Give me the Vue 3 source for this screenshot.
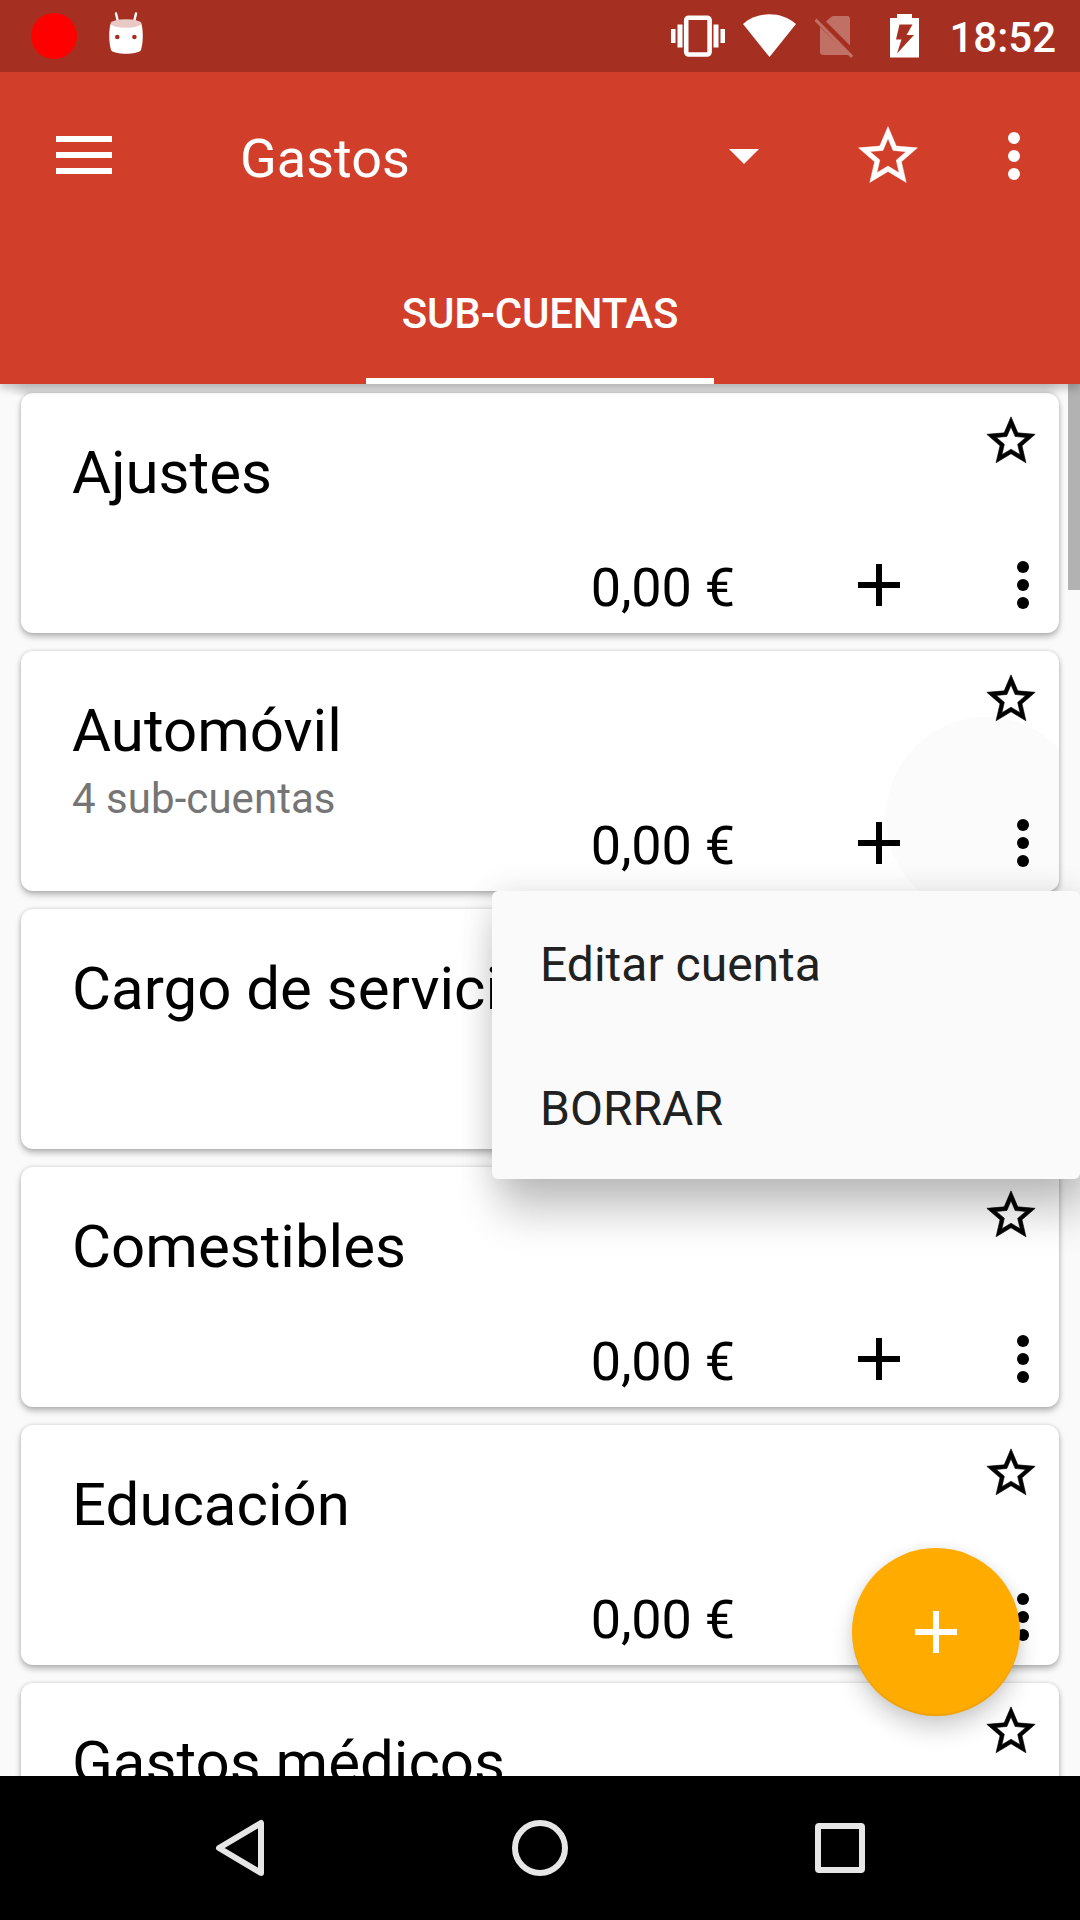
<script setup>
const accounts = [
  { name: 'Ajustes' },
  { name: 'Automóvil', detail: '4 sub-cuentas', pressed: true },
  { name: 'Cargo de servicio' },
  { name: 'Comestibles' },
  { name: 'Educación' },
  { name: 'Gastos médicos' },
]
const menu = ['Editar cuenta', 'BORRAR']
const starPath =
  'M22 9.24l-7.19-.62L12 2 9.19 8.63 2 9.24l5.46 4.73L5.82 21 12 17.27 18.18 21l-1.63-7.03L22 9.24zM12 15.4l-3.76 2.27 1-4.28-3.32-2.88 4.38-.38L12 6.1l1.71 4.04 4.38.38-3.32 2.88 1 4.28L12 15.4z'
</script>

<template>
  <div class="screen">
    <div class="status">
      <svg class="rec" width="46" height="46" viewBox="0 0 46 46"><circle cx="23" cy="23" r="23" fill="#f00" /></svg>
      <svg class="droid" width="36" height="44" viewBox="0 0 36 44">
        <path d="M8 2.5L10 11M28 2.5L26 11" stroke="#fff" stroke-width="2.4" stroke-linecap="round" />
        <path d="M2.5 13C.7 20 .7 31 3 39c3 5 27 5 30 0 2.3-8 2.3-19 .5-26z" fill="#fff" />
        <ellipse cx="18" cy="12.5" rx="15.5" ry="4.2" fill="#e9c9c6" />
        <circle cx="9.3" cy="26" r="2.3" fill="#a53021" />
        <circle cx="26.4" cy="26" r="2.3" fill="#a53021" />
      </svg>
      <span class="grow"></span>
      <svg width="54" height="44" viewBox="671 14 54 44">
        <rect x="686.2" y="17.7" width="23.4" height="36.8" rx="2.5" fill="none" stroke="#fff" stroke-width="4.6" />
        <path fill="#fff" d="M671 29h4.5v14H671zM677.5 24.5h5v23h-5zM713.5 24.5h5v23h-5zM720.5 29h4.5v14h-4.5z" />
      </svg>
      <svg class="wifi" width="54" height="44" viewBox="743 14 54 44">
        <path d="M743 24C758 11 781 11 796 24L769.5 57z" fill="#fff" />
      </svg>
      <svg class="sim" width="40" height="44" viewBox="815 15 40 44">
        <g fill="#fff" fill-opacity=".31">
          <path d="M826 21.5L831 17Q832 16 834 16h13q3 0 3 3v26.5z" />
          <path d="M820 27l28 27.5q-1 .5-2 .5h-23q-3 0-3-3z" />
          <path d="M816.5 18.5l-2 2.2 36.5 37.3 2.3-2.2z" />
        </g>
      </svg>
      <svg class="battery" width="29" height="44" viewBox="890 14 29 44">
        <path fill="#fff" fill-rule="evenodd" d="M897 14h15v4h7v39.6h-29V18h7zM899.5 24.5l-3.5 15h5.5l-4.5 14L914 35h-7.500l6-10.500z" />
      </svg>
      <span class="clock">18:52</span>
    </div>

    <header class="header">
      <div class="toolbar">
        <svg width="56" height="38" viewBox="0 0 56 38"><path fill="#fff" d="M0 0h56v6H0zM0 16h56v6H0zM0 32h56v6H0z" /></svg>
        <span class="heading">Gastos</span>
        <svg class="caret" width="30" height="15" viewBox="0 0 30 15"><path d="M0 0h30L15 15z" fill="#fff" /></svg>
        <svg class="fav" width="72" height="72" viewBox="-.2 -.2 24.4 24.4"><path :d="starPath" fill="#fff" stroke="#fff" stroke-width=".14" /></svg>
        <svg class="more" width="12" height="48" viewBox="0 0 12 48">
          <g fill="#fff"><circle cx="6" cy="6" r="6" /><circle cx="6" cy="24" r="6" /><circle cx="6" cy="42" r="6" /></g>
        </svg>
      </div>
      <nav class="tabs"><span class="tab">SUB-CUENTAS</span></nav>
    </header>

    <main class="list">
      <div class="edge"></div>
      <article v-for="a in accounts" :key="a.name" class="card">
        <div class="clip"><span v-if="a.pressed" class="ripple"></span></div>
        <div class="top">
          <div class="names">
            <div class="name">{{ a.name }}</div>
            <div v-if="a.detail" class="detail">{{ a.detail }}</div>
          </div>
          <svg class="star" width="58" height="58" viewBox="0 0 24 24"><path :d="starPath" stroke="#000" stroke-width=".25" /></svg>
        </div>
        <div class="bottom">
          <span class="amount">0,00 €</span>
          <svg width="42" height="42" viewBox="0 0 42 42"><path d="M18 0h6v18h18v6H24v18h-6V24H0v-6h18z" /></svg>
          <svg width="12" height="48" viewBox="0 0 12 48"><circle cx="6" cy="6" r="6" /><circle cx="6" cy="24" r="6" /><circle cx="6" cy="42" r="6" /></svg>
        </div>
      </article>
      <div class="scrollbar"></div>
    </main>

    <button class="fab" type="button">
      <svg width="42" height="42" viewBox="0 0 42 42"><path fill="#fff" d="M18 0h6v18h18v6H24v18h-6V24H0v-6h18z" /></svg>
    </button>

    <div class="menu">
      <div v-for="m in menu" :key="m" class="item">{{ m }}</div>
    </div>

    <footer class="navbar">
      <svg width="56" height="60" viewBox="0 0 56 60"><path d="M49 5V55L7 30z" /></svg>
      <svg width="60" height="60" viewBox="0 0 60 60"><circle cx="30" cy="30" r="25" /></svg>
      <svg width="56" height="60" viewBox="0 0 56 60"><rect x="6" y="8" width="44" height="44" rx="1" /></svg>
    </footer>
  </div>
</template>

<style>
body { margin: 0; }
</style>

<style scoped>
.screen {
  position: relative;
  width: 1080px;
  height: 1920px;
  overflow: hidden;
  display: flex;
  flex-direction: column;
  background: #fafafa;
  color: #000;
  font-family: Roboto, "Liberation Sans", sans-serif;
}
svg { display: block; flex: none; }
.grow { flex: 1; }
.status {
  flex: none;
  height: 72px;
  box-sizing: border-box;
  padding: 0 24px 0 31px;
  display: flex;
  align-items: center;
  background: #a53021;
  position: relative;
  z-index: 2;
}
.droid { margin: -7px 0 0 31px; }
.wifi { margin-left: 18px; }
.sim { margin-left: 18px; margin-top: 2px; }
.battery { margin-left: 35px; }
.clock {
  color: #fff;
  font-size: 42px;
  font-weight: 500;
  line-height: 50px;
  margin: 4px 0 0 30px;
}
.header {
  flex: none;
  height: 312px;
  background: #d13e2a;
  color: #fff;
  position: relative;
  z-index: 1;
  box-shadow: 0 5px 8px rgba(0, 0, 0, 0.2);
}
.toolbar {
  height: 168px;
  padding: 0 60px 0 56px;
  display: flex;
  align-items: center;
}
.toolbar > svg { margin-top: -2px; }
.heading { flex: 1; margin-left: 128px; font-size: 54px; line-height: 64px; margin-top: 5px; }
.toolbar > .fav { margin: 0 0 0 93px; }
.toolbar > .caret { margin-top: 1px; }
.toolbar > .more { margin: 0 0 0 84px; }
.tabs { height: 144px; display: flex; justify-content: center; }
.tab {
  width: 348px;
  box-sizing: border-box;
  border-bottom: 6px solid #fff;
  padding-top: 49px;
  text-align: center;
  font-size: 42px;
  font-weight: 500;
  line-height: 50px;
  letter-spacing: -0.2px;
}
.list {
  flex: 1;
  min-height: 0;
  position: relative;
  overflow: hidden;
  display: flex;
  flex-direction: column;
  gap: 18px;
  padding: 9px 21px 0;
}
.edge {
  position: absolute;
  left: 10px;
  right: 18px;
  top: 0;
  height: 20px;
  background: linear-gradient(90deg, rgba(0,0,0,0), rgba(0,0,0,.09) 16px, rgba(0,0,0,.09) calc(100% - 16px), rgba(0,0,0,0));
  -webkit-mask-image: linear-gradient(#000 9px, transparent 13px);
  mask-image: linear-gradient(#000 9px, transparent 13px);
}
.card {
  flex: none;
  height: 240px;
  position: relative;
  background: #fff;
  border-radius: 12px;
  box-shadow: 0 4px 6px rgba(0, 0, 0, 0.25), 0 0 4px rgba(0, 0, 0, 0.15);
}
.clip { position: absolute; inset: 0; border-radius: 12px; overflow: hidden; }
.ripple {
  position: absolute;
  left: 865px;
  top: 66px;
  width: 200px;
  height: 200px;
  border-radius: 50%;
  background: #fbfbfb;
}
.top { position: relative; height: 162px; display: flex; justify-content: space-between; }
.names { padding: 44px 0 0 51px; }
.name { font-size: 60px; line-height: 71px; white-space: nowrap; }
.detail { font-size: 42px; line-height: 49px; margin-top: 8px; color: #757575; white-space: nowrap; letter-spacing: 0.05px; }
.star { margin: 19px 19px 0 0; }
.bottom {
  position: relative;
  height: 60px;
  display: flex;
  align-items: center;
  padding-right: 30px;
}
.amount {
  flex: 1;
  text-align: right;
  font-size: 54px;
  line-height: 60px;
  letter-spacing: -0.2px;
  margin: 5px 123px 0 0;
}
.bottom svg + svg { margin-left: 117px; }
.scrollbar { position: absolute; right: 0; top: 0; width: 12px; height: 206px; background: #b2b2b2; }
.fab {
  position: absolute;
  left: 852px;
  top: 1548px;
  width: 168px;
  height: 168px;
  border: 0;
  padding: 0;
  border-radius: 50%;
  display: flex;
  align-items: center;
  justify-content: center;
  background: #ffab00;
  box-shadow: inset 0 -2px 1px rgba(0, 0, 0, 0.06), 0 14px 22px rgba(0, 0, 0, 0.17), 0 0 12px rgba(0, 0, 0, 0.08);
}
.menu {
  position: absolute;
  left: 492px;
  top: 891px;
  width: 588px;
  height: 288px;
  border-radius: 6px;
  background: #fafafa;
  box-shadow: 8px 32px 44px rgba(0, 0, 0, 0.23), 0 0 32px rgba(0, 0, 0, 0.11);
}
.item {
  height: 144px;
  line-height: 147px;
  padding-left: 48px;
  font-size: 48px;
  color: #212121;
}
.navbar {
  flex: none;
  height: 144px;
  box-sizing: border-box;
  padding: 0 212px;
  background: #000;
  position: relative;
  display: flex;
  align-items: center;
  justify-content: space-between;
}
.navbar svg { fill: none; stroke: #e6e6e6; stroke-width: 6; stroke-linejoin: round; }
</style>
